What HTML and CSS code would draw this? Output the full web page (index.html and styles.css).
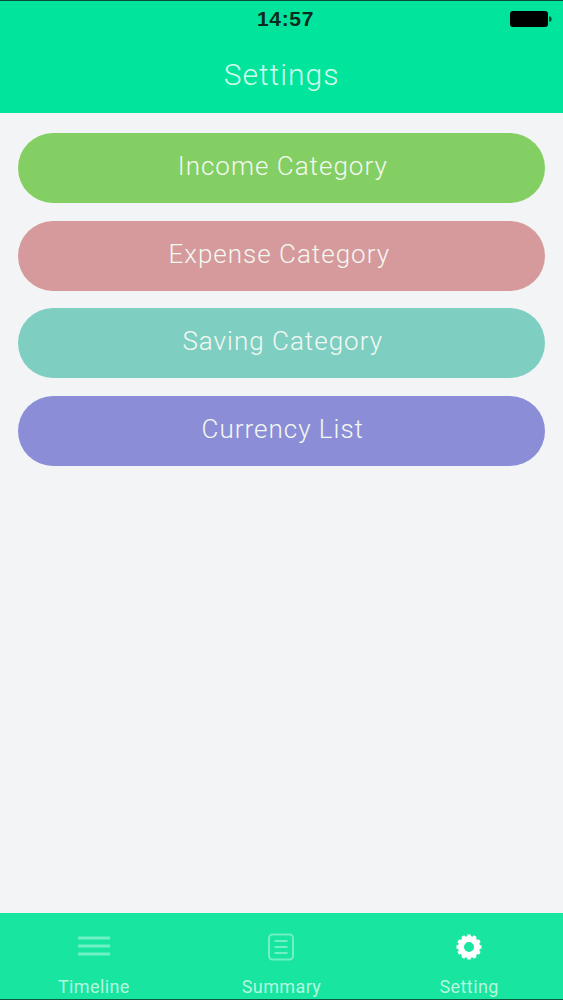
FILE: index.html
```html
<!DOCTYPE html>
<html lang="en">

<head>
  <meta charset="UTF-8">
  <meta name="viewport" content="width=device-width, initial-scale=1.0">
  <title>Settings</title>
  <link rel="stylesheet" href="styles.css">
</head>

<body>
  <div class="app">
    <header class="top">
      <div class="status">
        <span class="time">14:57</span>
        <svg class="battery" width="42" height="16" viewBox="0 0 42 16">
          <rect x="0" y="0" width="38" height="16" rx="3" fill="#000" />
          <path d="M39 5.5h1a1.5 1.5 0 0 1 1.500 1.500v2a1.500 1.500 0 0 1-1.500 1.500h-1z" fill="#06452f" />
        </svg>
      </div>
      <h1 class="title">Settings</h1>
    </header>

    <main class="list">
      <a class="btn income">Income Category</a>
      <a class="btn expense">Expense Category</a>
      <a class="btn saving">Saving Category</a>
      <a class="btn currency">Currency List</a>
    </main>

    <nav class="tabs">
      <div class="tab">
        <svg class="icon-lines" width="36" height="24" viewBox="0 0 36 24" fill="none" stroke="#6ff0c6" stroke-width="3">
          <path d="M2 4h32M2 12h32M2 20h32" />
        </svg>
        <span>Timeline</span>
      </div>
      <div class="tab">
        <svg width="28" height="28" viewBox="0 0 28 28" fill="none" stroke="#6ff0c6" stroke-width="2">
          <rect x="2" y="1.500" width="24" height="25" rx="3.500" />
          <path d="M7.500 8h13M7.500 14h13M7.500 20h13" />
        </svg>
        <span>Summary</span>
      </div>
      <div class="tab active">
        <svg width="28" height="28" viewBox="0 0 28 28">
          <circle cx="14" cy="14" r="8" fill="none" stroke="#fff" stroke-width="6" />
          <path d="M14 14V1.500M14 14l6.250-10.830M14 14l10.830-6.250M14 14h12.500M14 14l10.830 6.250M14 14l6.250 10.830M14 14v12.500M14 14l-6.250 10.830M14 14l-10.830 6.250M14 14H1.500M14 14L3.170 7.750M14 14L7.750 3.170" stroke="#fff" stroke-width="3.500" stroke-dasharray="0 8.500 4 10" fill="none" />
        </svg>
        <span>Setting</span>
      </div>
    </nav>
  </div>
</body>

</html>
```

FILE: styles.css
```css
* {
  margin: 0;
  padding: 0;
  box-sizing: border-box;
}

body {
  font-family: "Roboto", "Liberation Sans", sans-serif;
  background: #f3f4f6;
}

.app {
  height: 1000px;
  display: flex;
  flex-direction: column;
  border-top: 1px solid #0c4a38;
  border-bottom: 1px solid #0c5a40;
}

.top {
  height: 112px;
  background: #00e59b;
  padding-top: 6px;
}

.status {
  height: 24px;
  display: flex;
  align-items: center;
  justify-content: center;
  position: relative;
}

.time {
  font-family: "Liberation Sans", sans-serif;
  font-size: 21px;
  font-weight: 700;
  color: #0b2a20;
  letter-spacing: 0.7px;
  padding-left: 8px;
}

.battery {
  position: absolute;
  right: 11px;
  top: 4px;
}

.title {
  margin-top: 26px;
  text-align: center;
  font-size: 30px;
  font-weight: 300;
  line-height: 36px;
  letter-spacing: 1px;
  color: #d2fbec;
}

.list {
  flex: 1;
  display: flex;
  flex-direction: column;
  gap: 17.67px;
  padding: 20px 18px 0 17.5px;
}

.btn {
  height: 70px;
  border-radius: 35px;
  display: flex;
  align-items: center;
  justify-content: center;
  padding: 0 0 4px 3px;
  font-size: 26px;
  font-weight: 300;
  letter-spacing: 1px;
  color: #f4f8f2;
}

.income {
  background: #83cf63;
}

.expense {
  background: #d69a9c;
  padding: 0 4px 4px 0;
}

.saving {
  background: #7ecfc2;
}

.currency {
  background: #8b8ed6;
}

.tabs {
  height: 86px;
  background: #17e5a0;
  display: grid;
  grid-template-columns: repeat(3, 1fr);
}

.tab {
  display: flex;
  flex-direction: column;
  align-items: center;
  justify-content: space-between;
  padding-top: 20px;
  color: #b5f7df;
  font-size: 18px;
  font-weight: 400;
  letter-spacing: 0.4px;
}

.tab span {
  line-height: 22px;
  margin-bottom: 1px;
}

.icon-lines {
  margin-top: 1px;
}
```
